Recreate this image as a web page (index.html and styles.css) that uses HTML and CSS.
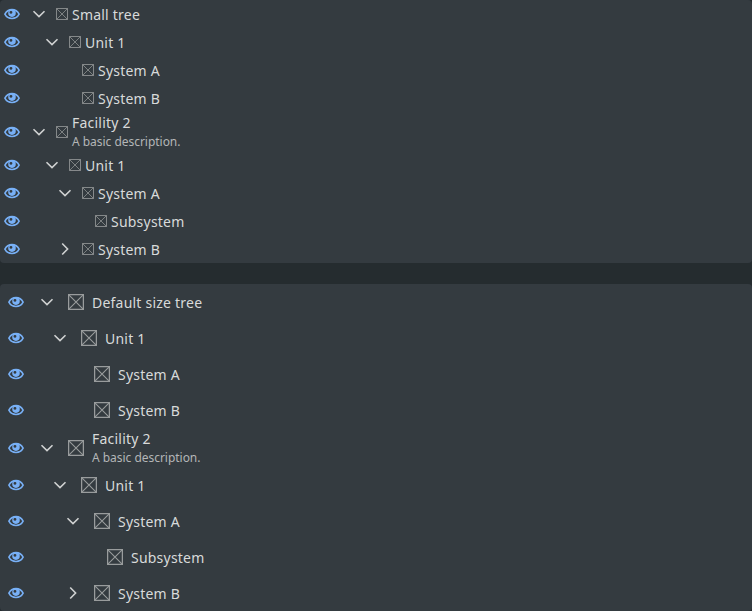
FILE: index.html
```
<!DOCTYPE html>
<html lang="en">
<head>
<meta charset="utf-8">
<title>Trees</title>
<link rel="stylesheet" href="styles.css">
</head>
<body>
<svg class="defs" aria-hidden="true">
  <symbol id="eye" viewBox="0 0 16 16">
    <path class="lids" d="M.9 8.200C2.400 5.200 5 3.600 8 3.600S13.600 5.200 15.100 8.200C13.600 11.200 11 12.500 8 12.500S2.400 11.200.9 8.200z"/>
    <path class="iris" fill-rule="evenodd" d="M8 3.300a3.800 3.800 0 1 0 0 7.600a3.800 3.800 0 0 0 0-7.600zM7 4.900a1.400 1.400 0 0 0-.2 2.800a1.400 1.400 0 0 0 1.600-1.400a1.400 1.400 0 0 0-1.400-1.400z"/>
  </symbol>
  <symbol id="down" viewBox="0 0 16 16"><path d="M2.500 5.200 8 10.600l5.500-5.400"/></symbol>
  <symbol id="right" viewBox="0 0 16 16"><path d="M5.200 2.500 10.600 8l-5.400 5.500"/></symbol>
  <symbol id="box" viewBox="0 0 16 16"><path d="M.6.6h14.800v14.800H.6z"/><path class="cross" d="M.6.6l14.800 14.800M15.400.6L.6 15.400"/></symbol>
</svg>
<main></main>
<script src="tree.js"></script>
</body>
</html>
```
FILE: styles.css
```
body {
  margin: 0;
  background: #252c2f;
  color: #d8dada;
  font: 14px/22px "Noto Sans", "Open Sans", sans-serif;
}
.defs { display: none; }
main {
  display: flex;
  flex-direction: column;
  gap: 21px;
}
.tree {
  margin: 0;
  padding: 0;
  list-style: none;
  background: #343b40;
  border-radius: 4px;
}
.node {
  display: flex;
  align-items: center;
  box-sizing: border-box;
  height: 36px;
  padding-left: 8px;
}
.node.described { height: 39px; }
.eye, .chevron, .box { flex: none; width: 16px; height: 16px; }
.eye { margin-top: -1px; }
.described .eye { margin-top: 0; }
.lids { fill: none; stroke: #78b0f6; stroke-width: 1.6; }
.iris { fill: #78b0f6; }
.indent { flex: none; width: calc(var(--level) * 13px); }
.chevron {
  margin: 0 13px 0 15px;
  fill: none;
  stroke: #d0d2d2;
  stroke-width: 1.6;
}
.box { fill: none; stroke: #999c9d; stroke-width: 1.3; }
.cross { stroke-width: 1.1; }
.text { display: flex; flex-direction: column; margin-left: 8px; padding-top: 1px; }
.label { letter-spacing: .22px; }
.description { font-size: 12px; line-height: 16px; letter-spacing: -.03px; color: #b3b6b7; }
.described .text { padding: 0; }
.described .label { line-height: 20px; padding-bottom: 1px; }
.small .node { height: 28px; padding-left: 4px; }
.small .node.described { height: 39px; }
.small .chevron { margin: 0 9px 0 11px; }
.small .box { width: 12px; height: 12px; stroke: #8d9091; }
.small .text { margin-left: 4px; }
```
FILE: tree.js
```
const icon = (cls, name) => `<svg class="${cls}">${name ? `<use href="#${name}"/>` : ""}</svg>`;

const tree = (cls, title) => {
  const nodes = [
    [0, "down", title],
    [1, "down", "Unit 1"],
    [2, "", "System A"],
    [2, "", "System B"],
    [0, "down", "Facility 2", "A basic description."],
    [1, "down", "Unit 1"],
    [2, "down", "System A"],
    [3, "", "Subsystem"],
    [2, "right", "System B"],
  ];
  const rows = nodes.map(([level, chevron, label, description]) => `
    <li class="node${description ? " described" : ""}">
      ${icon("eye", "eye")}
      <span class="indent" style="--level:${level}"></span>
      ${icon("chevron", chevron)}
      ${icon("box", "box")}
      <span class="text"><span class="label">${label}</span>${description ? `<span class="description">${description}</span>` : ""}</span>
    </li>`);
  return `<ul class="tree ${cls}">${rows.join("")}</ul>`;
};

document.querySelector("main").innerHTML =
  tree("small", "Small tree") + tree("", "Default size tree");
```
